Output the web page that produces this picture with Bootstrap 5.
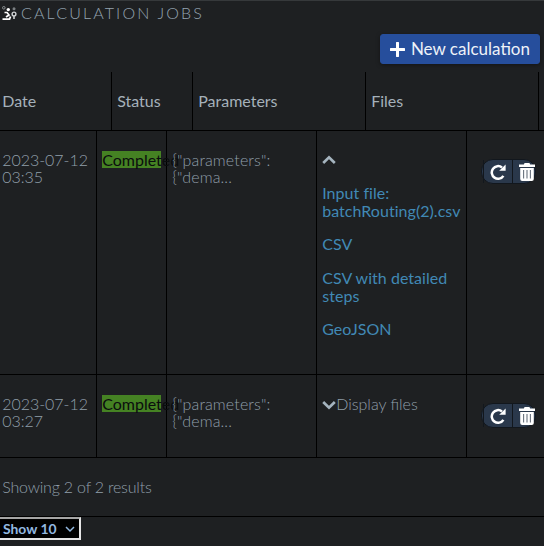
<!DOCTYPE html>
<html lang="en">
<head>
<meta charset="utf-8">
<meta name="viewport" content="width=device-width, initial-scale=1">
<title>Calculation jobs</title>
<link href="https://cdn.jsdelivr.net/npm/bootstrap@5.3.0/dist/css/bootstrap.min.css" rel="stylesheet">
<style>
body{background:#1e2022;color:#909faa;font:300 16px/17px Lato,sans-serif;height:546px;overflow:hidden;border-top:1px solid #36393b}
.page-title{font-size:16px;font-weight:300;line-height:24px;letter-spacing:2.15px;height:33px;padding-left:2px;color:#94a3b0}
.page-title svg{margin:5px 4px 0 0}
.btn-new{--bs-btn-color:#eef2f8;--bs-btn-bg:#264e9c;--bs-btn-border-color:#264e9c;--bs-btn-border-radius:3px;--bs-btn-padding-x:9px;--bs-btn-padding-y:0;font-size:17px;font-weight:400;width:160px;height:30px;line-height:28px;margin-right:4px;white-space:nowrap;box-shadow:0 1px 4px #0006}
.grid-head,.grid-row{display:grid;border-bottom:1px solid #000}
.grid-head{grid-template-columns:112px 81px 173px 173px 5px;height:59px;margin-top:8px;font-weight:400;color:#a5b1ba}
.grid-row{grid-template-columns:97px 70px 150px 150px 77px}
.grid-head>div,.grid-row>div{border-right:1px solid #000;padding:20px 0 0 5.2px;min-width:0}
.grid-head>div:first-child,.grid-row>div:first-child{padding-left:2.3px}
.grid-row>div:last-child,.grid-head>div:last-child{border-right:0}
.row-open{height:244px}
.row-closed{height:83px}
.when{letter-spacing:-.05px}
.params{letter-spacing:.12px}
.state{background:#458223;color:#0b0d0e;font-weight:400;width:59px;height:17px;white-space:nowrap}
.file-link{color:#4189b5;font-weight:400;line-height:18px;text-decoration:none;margin-bottom:15.3px;letter-spacing:.04px}
.file-link:hover{color:#6fb0d8}
.chev{width:14px;height:14px;display:block;margin-top:1px}
.row-open .chev{margin-bottom:18px}
.actions{width:55px;height:25px;margin:8px 0 0 9px;border:1px solid #12171d;border-radius:12px;background:#2a384b}
.act{border:0;background:none;padding:0;height:23px;border-left:1px solid #12171d;flex:none}
.act-run{width:29px;margin-left:1px}
.act-del{width:29px}
.summary{height:59px;padding:20px 0 0 2.3px;letter-spacing:-.2px;border-bottom:1px solid #000}
.size-pick{width:81px;height:23px;background:#000;border:2px solid #e6e6e6;border-top-color:#a5a5a5;border-left:0;border-radius:0;color:#93b9e0;font:700 13.9px/19px Lato,sans-serif;padding:0 4px 0 3px}
.size-pick svg{margin-top:2px}
</style>
<script src="https://cdn.jsdelivr.net/npm/bootstrap@5.3.0/dist/js/bootstrap.bundle.min.js"></script>
</head>
<body>
<svg class="d-none">
<symbol id="redo" viewBox="0 0 16 16"><path d="M13.4 11.8A6.3 6.3 0 1 1 12 3.5" fill="none" stroke="#fff" stroke-width="2.5"/><path d="M15.6.6v6.2H9.2z" fill="#fff"/></symbol>
<symbol id="trash" viewBox="0 0 16 18"><path d="M0 1.5h4.8L5.6 0h4.8l.8 1.5H16V4H0z" fill="#fff"/><path d="M1.2 5h13.6v11q0 2-2 2H3.2q-2 0-2-2z" fill="#fff"/><path d="M4.6 7v8.5M8 7v8.5M11.4 7v8.5" stroke="#68717d" stroke-width="1.1"/></symbol>
</svg>
<h1 class="page-title d-flex align-items-start mb-0"><svg width="15" height="15" viewBox="0 0 15 15" fill="none"><circle cx="1.8" cy="1.8" r="1.3" stroke="#8c9093"/><circle cx="6.3" cy="3.6" r="1.7" fill="#fff"/><path d="M2.5 6.5H5L7 9 4 11" stroke="#fff" stroke-width="1.7"/><path d="M.5 13.2H7.5L8.5 10.5" stroke="#fff" stroke-width="1.8"/><circle cx="12" cy="2.8" r="1.5" fill="#7b7f82"/><circle cx="12" cy="8" r="1.9" stroke="#d0d2d4" stroke-width="1.4"/><path d="M12 10v3" stroke="#d0d2d4" stroke-width="1.6"/></svg>CALCULATION JOBS</h1>
<div class="d-flex justify-content-end"><button class="btn btn-new d-flex align-items-center justify-content-between"><svg width="15" height="15" viewBox="0 0 15 15"><path d="M7.5 1v13M1 7.5h13" stroke="#fff" stroke-width="3" stroke-linecap="round"/></svg>New calculation</button></div>
<div class="grid-head"><div>Date</div><div>Status</div><div>Parameters</div><div>Files</div><div></div></div>
<div class="grid-row row-open">
<div class="when">2023-07-12<br>03:35</div>
<div><div class="state">Completed</div></div>
<div class="params">{"parameters":<br>{"dema...</div>
<div class="d-flex flex-column"><svg class="chev" viewBox="0 0 14 14"><path d="M1.2 11 7 5.4 12.8 11" fill="none" stroke="#a5b4bf" stroke-width="2.7"/></svg>
<a class="file-link" href="#">Input file: batchRouting(2).csv</a><a class="file-link" href="#">CSV</a><a class="file-link" href="#">CSV with detailed steps</a><a class="file-link" href="#">GeoJSON</a></div>
<div><div class="actions d-flex"><button class="act act-run d-flex align-items-center justify-content-center" aria-label="Rerun"><svg width="16" height="16"><use href="#redo"/></svg></button><button class="act act-del d-flex align-items-center justify-content-center" aria-label="Delete"><svg width="16" height="18"><use href="#trash"/></svg></button></div></div>
</div>
<div class="grid-row row-closed">
<div class="when">2023-07-12<br>03:27</div>
<div><div class="state">Completed</div></div>
<div class="params">{"parameters":<br>{"dema...</div>
<div class="d-flex align-items-start"><svg class="chev" viewBox="0 0 14 14"><path d="M1.2 6 7 11.6 12.8 6" fill="none" stroke="#a5b4bf" stroke-width="2.7"/></svg>Display files</div>
<div><div class="actions d-flex"><button class="act act-run d-flex align-items-center justify-content-center" aria-label="Rerun"><svg width="16" height="16"><use href="#redo"/></svg></button><button class="act act-del d-flex align-items-center justify-content-center" aria-label="Delete"><svg width="16" height="18"><use href="#trash"/></svg></button></div></div>
</div>
<div class="summary">Showing 2 of 2 results</div>
<button class="size-pick d-flex align-items-center justify-content-between">Show 10<svg width="10" height="7" viewBox="0 0 10 7"><path d="m1 1 4 4 4-4" fill="none" stroke="#93b9e0" stroke-width="1.5"/></svg></button>
</body>
</html>
